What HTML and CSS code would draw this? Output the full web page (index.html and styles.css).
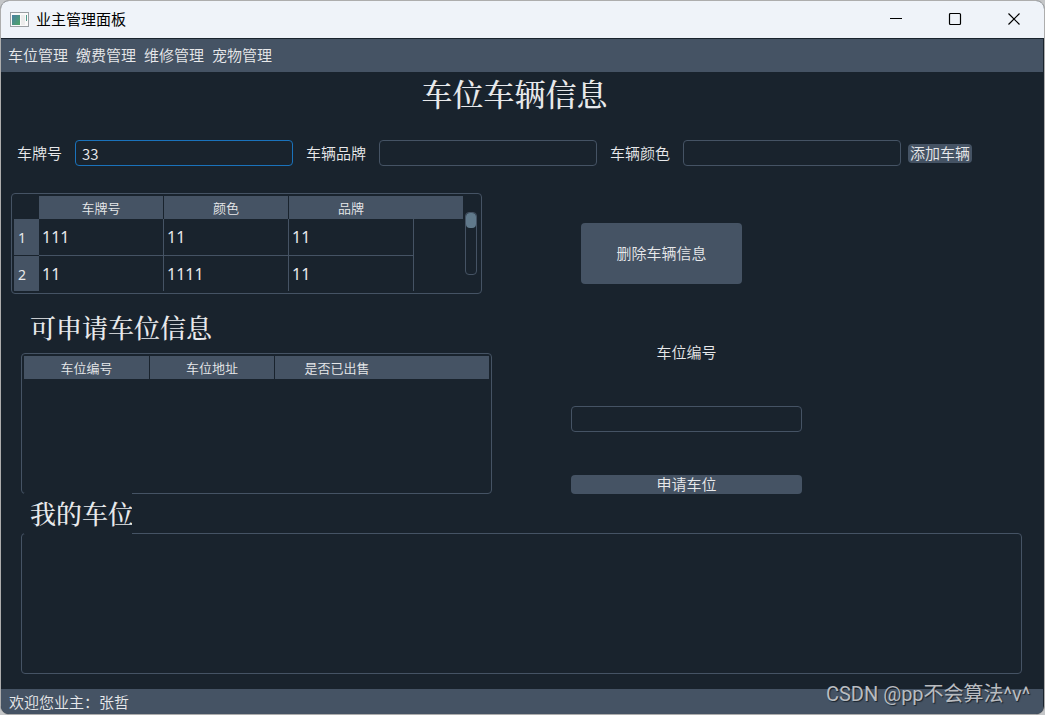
FILE: index.html
```
<!DOCTYPE html>
<html lang="zh-CN">
<head>
<meta charset="utf-8">
<title>业主管理面板</title>
<link rel="stylesheet" href="styles.css">
</head>
<body>
<div class="window">
  <header class="titlebar">
    <svg class="app-icon" width="19" height="16" viewBox="0 0 19 16" aria-hidden="true">
      <defs><linearGradient id="pane" x1="0" y1="0" x2="1" y2="1"><stop offset="0" stop-color="#4a7fa4"/><stop offset="1" stop-color="#4da565"/></linearGradient></defs>
      <rect x="0.5" y="0.5" width="18" height="14" fill="#fafafa" stroke="#9a9fa3"/>
      <rect x="2" y="3" width="8" height="10" fill="url(#pane)"/>
      <rect x="11" y="3" width="4" height="10" fill="#ececec"/>
      <rect x="16" y="3" width="1" height="6" fill="#4f9a8b"/>
    </svg>
    <span class="caption">业主管理面板</span>
    <div class="controls">
      <button class="control" aria-label="最小化"><svg width="14" height="14" viewBox="0 0 14 14"><path d="M1 6.500h12" stroke="#000"/></svg></button>
      <button class="control" aria-label="最大化"><svg width="14" height="14" viewBox="0 0 14 14"><rect x="1.500" y="1.500" width="11" height="11" rx="1" fill="none" stroke="#000" stroke-width="1.200"/></svg></button>
      <button class="control" aria-label="关闭"><svg width="14" height="14" viewBox="0 0 14 14"><path d="M1.500 1.500l11 11M12.500 1.500l-11 11" stroke="#000" stroke-width="1.200"/></svg></button>
    </div>
  </header>
  <nav class="menubar">
    <a href="#parking">车位管理</a>
    <a href="#payment">缴费管理</a>
    <a href="#repair">维修管理</a>
    <a href="#pets">宠物管理</a>
  </nav>
  <main class="content">
    <h1 class="title">车位车辆信息</h1>
    <form class="car-form">
      <label for="plate">车牌号</label>
      <input class="field active" id="plate" type="text" value="33">
      <label for="brand">车辆品牌</label>
      <input class="field" id="brand" type="text">
      <label for="color">车辆颜色</label>
      <input class="field" id="color" type="text">
      <button class="button" type="button">添加车辆</button>
    </form>
    <section class="cars">
      <div class="panel cars-panel">
        <table class="grid">
          <colgroup><col class="col-index"><col class="col"><col class="col"><col class="col"><col></colgroup>
          <thead><tr><td></td><th>车牌号</th><th>颜色</th><th colspan="2"><span class="last-head">品牌</span></th></tr></thead>
          <tbody>
            <tr><th scope="row">1</th><td>111</td><td>11</td><td>11</td><td class="filler"></td></tr>
            <tr><th scope="row">2</th><td>11</td><td>1111</td><td>11</td><td class="filler"></td></tr>
          </tbody>
        </table>
        <div class="scrollbar"><div class="thumb"></div></div>
      </div>
      <button class="button delete" type="button">删除车辆信息</button>
    </section>
    <section class="spaces">
      <div class="spaces-list">
        <h2 class="subtitle">可申请车位信息</h2>
        <div class="panel spaces-panel">
          <table class="grid">
            <colgroup><col class="col-first"><col class="col"><col></colgroup>
            <thead><tr><th>车位编号</th><th>车位地址</th><th><span class="last-head">是否已出售</span></th></tr></thead>
          </table>
        </div>
      </div>
      <form class="apply">
        <label for="space">车位编号</label>
        <input class="field" id="space" type="text">
        <button class="button" type="button">申请车位</button>
      </form>
    </section>
    <section class="mine">
      <h2 class="subtitle overlay">我的车位</h2>
      <div class="panel mine-panel"></div>
    </section>
  </main>
  <footer class="statusbar">欢迎您业主：张哲</footer>
</div>
<div class="watermark">CSDN @pp不会算法^v^</div>
</body>
</html>
```
FILE: styles.css
```
* { box-sizing: border-box; }

body {
  margin: 0;
  min-height: 100vh;
  display: flex;
  position: relative;
  background: #c4c6c8;
  font-family: "Noto Sans CJK SC", sans-serif;
  font-size: 15px;
  line-height: 20px;
  font-weight: 350;
  color: #e8e9eb;
}

button, input { font: inherit; color: inherit; }

.window {
  flex: 1;
  display: flex;
  flex-direction: column;
  border: 1px solid #adadad;
  border-radius: 9px;
  overflow: hidden;
  background: #19232d;
}

.titlebar {
  display: flex;
  align-items: center;
  height: 37px;
  padding: 0 1px 2px 9px;
  background: #eff3f9;
  color: #000;
}
.app-icon { margin-top: 2px; }
.caption { margin-left: 7px; font-weight: 400; }
.controls { display: flex; margin-left: auto; height: 100%; }
.control {
  display: flex;
  align-items: center;
  justify-content: center;
  width: 59px;
  padding: 0;
  border: 0;
  background: none;
}

.menubar {
  display: flex;
  align-items: center;
  gap: 8px;
  height: 33px;
  margin: 1px 1px 0 0;
  padding: 0 0 2px 7px;
  background: #455364;
}
.menubar a { color: inherit; text-decoration: none; }

.content { flex: 1; display: flex; flex-direction: column; padding-right: 1px; }

.title, .subtitle {
  margin: 0;
  font-family: "Noto Serif CJK SC", "Noto Sans CJK SC", serif;
  font-weight: 500;
}
.title {
  padding: 1px 15px 0 0;
  font-size: 31px;
  line-height: 40px;
  text-align: center;
}
.subtitle { font-size: 26px; line-height: 40px; padding-left: 9px; }

.field {
  min-width: 0;
  height: 26px;
  padding: 0 6px;
  border: 1px solid #455364;
  border-radius: 4px;
  background: #19232d;
  outline: none;
}
.field.active { border-color: #1a72bb; }

.button {
  height: 19px;
  padding: 0 2px 2px;
  border: 0;
  border-radius: 4px;
  background: #455364;
  line-height: 17px;
}

.car-form {
  display: flex;
  align-items: center;
  margin-top: 27px;
  padding: 0 71px 0 16px;
}
.car-form .field { flex: 1; margin: 0 13px; }
.car-form .field:last-of-type { margin-right: 7px; }

.panel {
  display: flex;
  align-items: flex-start;
  padding: 2px;
  border: 1px solid #455364;
  border-radius: 4px;
}

.grid {
  flex: 1;
  table-layout: fixed;
  width: 100%;
  border-collapse: separate;
  border-spacing: 0;
}
.grid th, .grid td { padding: 0; }
.col-index { width: 25px; }
.col { width: 125px; }
.col-first { width: 126px; }
.grid thead th {
  height: 23px;
  border-right: 1px solid #19232d;
  background: #455364;
  font-size: 13px;
  font-weight: 350;
}
.grid thead th:last-child { border-right: 0; text-align: left; }
.last-head { display: block; width: 124px; text-align: center; }
.grid tbody th {
  height: 37px;
  border-bottom: 1px solid #19232d;
  padding: 2px 0 0 4px;
  background: #455364;
  font-family: "Noto Sans", sans-serif;
  font-size: 14px;
  font-weight: 400;
  text-align: left;
}
.grid tbody td {
  padding: 0 0 0 3px;
  border-right: 1px solid #455364;
  border-bottom: 1px solid #455364;
  font-family: "Noto Sans", sans-serif;
  font-size: 16px;
  font-weight: 400;
}
.grid tbody td.filler { border: 0; }
.grid tbody tr:last-child td { border-bottom: 0; }
.grid tbody tr:last-child th { height: 35px; border-bottom: 0; }

.cars {
  display: grid;
  grid-template-columns: 471fr 99fr 161fr 301fr;
  margin-top: 27px;
  padding-left: 10px;
}
.delete { grid-column: 3; height: 61px; margin-top: 30px; }

.scrollbar {
  width: 12px;
  height: 63px;
  margin: 16px 2px 0;
  border: 1px solid #455364;
  border-radius: 4px;
}
.thumb { height: 15px; border-radius: 4px; background: #60798b; }

.spaces {
  display: grid;
  grid-template-columns: 471fr 79fr 231fr 241fr;
  margin-top: 13px;
  padding-left: 20px;
}
.spaces-panel { height: 141px; margin-top: 6px; }
.apply {
  grid-column: 3;
  display: flex;
  flex-direction: column;
  justify-content: space-between;
  margin-top: 35px;
}
.apply label { text-align: center; }

.mine {
  flex: 1;
  display: flex;
  flex-direction: column;
  margin-top: -1px;
  padding: 0 21px 15px 20px;
}
.overlay {
  position: relative;
  width: 108px;
  height: 41px;
  margin: 0 0 -1px 3px;
  padding-left: 6px;
  overflow: hidden;
  white-space: nowrap;
  background: #19232d;
}
.mine-panel { flex: 1; min-height: 80px; }

.statusbar {
  height: 25px;
  padding: 3px 8px;
  margin-right: 1px;
  background: #455364;
}

.watermark {
  position: absolute;
  right: 15px;
  bottom: 8px;
  font-family: Roboto, "Noto Sans CJK SC", sans-serif;
  font-size: 20px;
  font-weight: 400;
  line-height: 26px;
  color: #b9bcc0;
  text-shadow: 1px 1px 1px #19232d;
}
```
